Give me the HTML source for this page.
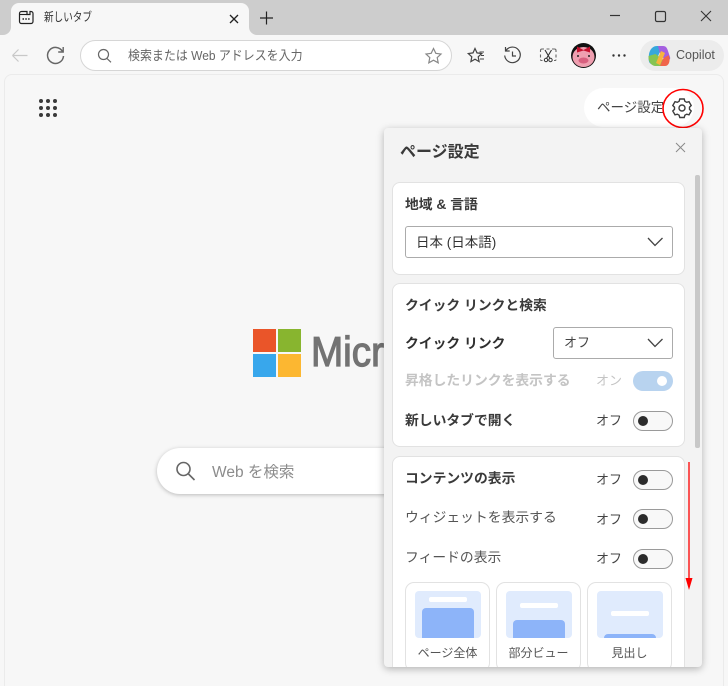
<!DOCTYPE html>
<html lang="ja"><head><meta charset="utf-8"><style>
html,body{margin:0;padding:0;width:728px;height:686px;overflow:hidden;background:#f7f7f7}
body{position:relative;font-family:"Liberation Sans","Noto Sans CJK JP",sans-serif;color:#333}
.a{position:absolute;white-space:nowrap}
svg{position:absolute;overflow:visible}
.t{font-size:13.8px;line-height:18px}
.o{font-size:13px;line-height:18px;color:#444}
.b{font-weight:700;color:#3a3a3a}
.card{position:absolute;left:392px;width:293px;background:#fff;border:1px solid #e2e2e2;border-radius:8px;box-sizing:border-box}
.tog{position:absolute;left:633px;width:40px;height:20px;border:1px solid #9a9a9a;border-radius:10px;box-sizing:border-box;background:#f8f8f8}
.tog i{position:absolute;left:4px;top:4px;width:10px;height:10px;border-radius:50%;background:#2b2b2b}
.sel{position:absolute;background:#fff;border:1px solid #ababab;border-radius:3px;box-sizing:border-box}
.th{position:absolute;top:582px;width:85px;height:90px;background:#fff;border:1px solid #e2e2e2;border-radius:9px;box-sizing:border-box}
.pv{position:absolute;left:9px;top:8px;width:66px;height:47px;background:#e0ebfd;border-radius:4px;overflow:hidden}
.pv u{position:absolute;left:14px;width:38px;height:5px;background:#fff;border-radius:2px}
.pv b{position:absolute;left:7px;width:52px;background:#8db4f9;border-radius:4px 4px 0 0;height:40px}
.th span{position:absolute;left:0;right:0;top:62px;text-align:center;font-size:12px;line-height:16px;color:#555}
</style></head><body>
<div class="a" style="left:0;top:0;width:728px;height:35px;background:#cdcdcd"></div>
<div class="a" style="left:11px;top:3px;width:238px;height:32px;background:#f7f7f7;border-radius:8px 8px 0 0"></div>
<svg style="left:0;top:0" width="728" height="74" fill="none">
<path d="M3 35a8 8 0 0 0 8-8v8zM249 27a8 8 0 0 0 8 8h-8z" fill="#f7f7f7"/>
<path d="M27 11.500h-5.500a2 2 0 0 0-2 2v8a2 2 0 0 0 2 2h9.500a2 2 0 0 0 2-2v-8a2 2 0 0 0-2-2h-1v3h-3z" stroke="#222" stroke-width="1.200"/>
<path d="M19.500 14.500h7.500" stroke="#222" stroke-width="1.100"/>
<path d="M22.500 19h8" stroke="#222" stroke-width="1.500" stroke-dasharray="1.500 1.300"/>
<path d="M230 15l8 8M238 15l-8 8" stroke="#222" stroke-width="1.300"/>
<path d="M266.500 11.500v13M260 18h13" stroke="#222" stroke-width="1.200"/>
<path d="M610 15.500h10" stroke="#333" stroke-width="1.200"/>
<rect x="655.500" y="11.500" width="10" height="10" rx="1.500" stroke="#333" stroke-width="1.200"/>
<path d="M701 11l10 10M711 11l-10 10" stroke="#333" stroke-width="1.100"/>
<path d="M12.500 55.500h15M12.500 55.500l6-6M12.500 55.500l6 6" stroke="#c8c8c8" stroke-width="1.200"/>
<path d="M62.500 51.500A8 8 0 1 0 63.500 56" stroke="#666" stroke-width="1.500"/>
<path d="M63.200 47v5h-5" stroke="#666" stroke-width="1.400"/>
</svg>
<div class="a" style="left:44px;top:9px;font-size:12px;line-height:17px;color:#333;transform:scaleX(.8);transform-origin:left top">新しいタブ</div>
<div class="a" style="left:80px;top:40px;width:372px;height:31px;box-sizing:border-box;background:#fff;border:1px solid #d6d6d6;border-radius:16px"></div>
<div class="a" style="left:128px;top:46px;font-size:13px;line-height:19px;color:#666;transform:scaleX(.92);transform-origin:left top">検索または Web アドレスを入力</div>
<svg style="left:0;top:0" width="728" height="130" fill="none">
<circle cx="103.500" cy="54.500" r="5" stroke="#666" stroke-width="1.200"/><path d="M107 58.500l4 3.800" stroke="#666" stroke-width="1.200"/>
<path d="M433.500 48.500l2.300 4.800 5.200.7-3.800 3.600 1 5.200-4.700-2.600-4.700 2.600 1-5.200-3.800-3.600 5.200-.7z" stroke="#888" stroke-width="1.200"/>
<path d="M475 48.500l2 4.400 4.700.6-3.500 3.300.9 4.800-4.100-2.400-4.100 2.400.9-4.800-3.500-3.300 4.700-.6z" stroke="#444" stroke-width="1.200"/>
<path d="M479.500 52h4.500M481 55.500h3M480 59h4" stroke="#444" stroke-width="1.100"/>
<path d="M506 50.500a7.800 7.800 0 1 1-1.300 5M505.500 47v4h4.200M512.500 51.500v4.500h3.500" stroke="#444" stroke-width="1.200"/>
<path d="M540.500 52v-1.500a1.500 1.500 0 0 1 1.500-1.500h2M546.500 49h3M552 49h2.500a1.500 1.500 0 0 1 1.500 1.500v1.500M556 54.500v3M556 59.500a1 1 0 0 1-1 1h-1M540.500 54.500v3M540.500 59.500a1 1 0 0 0 1 1h1" stroke="#666" stroke-width="1.100"/>
<path d="M545 50l5 8.500M551.500 50l-5 8.500" stroke="#333" stroke-width="1.100"/><circle cx="546" cy="60" r="1.700" stroke="#333"/><circle cx="550.500" cy="60" r="1.700" stroke="#333"/>
<circle cx="583.500" cy="55.500" r="12.500" fill="#111"/><ellipse cx="583.500" cy="57" rx="11" ry="10" fill="#ef9fb0"/>
<path d="M577 46.500l6.500 3.500 6.500-3.500v6l-6.500-2-6.500 2z" fill="#c4122f"/>
<ellipse cx="583.500" cy="60.500" rx="5" ry="3" fill="#d8607f"/>
<circle cx="578" cy="56" r="1" fill="#222"/><circle cx="589" cy="56" r="1" fill="#222"/>
<circle cx="613.500" cy="55.500" r="1.200" fill="#333"/><circle cx="619" cy="55.500" r="1.200" fill="#333"/><circle cx="624.500" cy="55.500" r="1.200" fill="#333"/>
</svg>
<div class="a" style="left:640px;top:40px;width:84px;height:31px;background:#ececec;border-radius:16px"></div>
<svg style="left:0;top:0" width="728" height="80">
<path d="M649 54c1-5 4-8 8-8h5l-5 13c-1 3-3 5-5 5-3 0-4-3-3-10z" fill="#37a8dc"/>
<path d="M658 46h5c3 0 4 2 5 5l2 6c1 3-2 4-5 3l-5-6z" fill="#a45fe0"/>
<path d="M648.500 57c0 5 3 9 7 9h5l3-6-8-6-7 2z" fill="#86c452"/>
<path d="M660 66h5c3 0 5-3 4.500-8l-1-3c-2 2-5 2-6 5z" fill="#f0644a"/>
<path d="M661 51l-5 12 4 2 5-12z" fill="#f8b33c"/>
</svg>
<div class="a" style="left:676px;top:47px;font-size:12.500px;line-height:17px;color:#555">Copilot</div>

<div class="a" style="left:4px;top:74px;width:720px;height:620px;background:#f7f7f7;border:1px solid #ebebeb;border-radius:8px;box-sizing:border-box"></div>
<svg style="left:0;top:0" width="100" height="130">
<g fill="#3a3a3a"><circle cx="41" cy="101" r="2"/><circle cx="48" cy="101" r="2"/><circle cx="55" cy="101" r="2"/><circle cx="41" cy="108" r="2"/><circle cx="48" cy="108" r="2"/><circle cx="55" cy="108" r="2"/><circle cx="41" cy="115" r="2"/><circle cx="48" cy="115" r="2"/><circle cx="55" cy="115" r="2"/></g>
</svg>
<div class="a" style="left:584px;top:88px;width:110px;height:39px;background:#fff;border-radius:20px"></div>
<div class="a" style="left:597px;top:99px;font-size:13.500px;line-height:18px;color:#444;width:68px;overflow:hidden">ページ設定</div>
<svg style="left:662px;top:88px" width="42" height="41" fill="none">
<ellipse cx="21" cy="20.500" rx="20" ry="19" stroke="#f00" stroke-width="1.600"/>
<g transform="translate(20 20)" stroke="#3c3c3c" stroke-width="1.400">
<path d="M-2.200-9h4.400l.7 2.300 1.800 1 2.300-.6 2.200 3.800-1.700 1.700v2.100l1.700 1.700-2.200 3.800-2.300-.6-1.800 1-.7 2.300h-4.400l-.7-2.300-1.800-1-2.300.6-2.200-3.800 1.700-1.700v-2.100l-1.700-1.700 2.200-3.800 2.300.6 1.800-1z"/>
<circle r="3"/></g></svg>

<svg style="left:253px;top:329px" width="48" height="48">
<rect width="23" height="23" fill="#ea5529"/><rect x="25" width="23" height="23" fill="#88b52f"/>
<rect y="25" width="23" height="23" fill="#38a7ec"/><rect x="25" y="25" width="23" height="23" fill="#fcb731"/></svg>
<div class="a" style="left:311px;top:326px;font-size:42px;line-height:52px;color:#737373;width:80px;overflow:hidden;-webkit-text-stroke:1.200px #737373;transform:scaleX(.92);transform-origin:left top">Microsoft</div>
<div class="a" style="left:157px;top:448px;width:260px;height:46px;background:#fff;border-radius:23px;box-shadow:0 1px 4px rgba(0,0,0,.25)"></div>
<svg style="left:170px;top:458px" width="30" height="26" fill="none"><circle cx="13.500" cy="11" r="6.500" stroke="#666" stroke-width="1.600"/><path d="M18.500 16l6 6" stroke="#666" stroke-width="1.600"/></svg>
<div class="a" style="left:212px;top:462px;font-size:15.500px;line-height:21px;color:#8c8c8c">Web を検索</div>

<div class="a" style="left:384px;top:128px;width:318px;height:539px;background:#f3f3f3;border-radius:4px;box-shadow:0 2px 8px rgba(0,0,0,.28);overflow:hidden"></div>
<div class="a" style="left:400px;top:142px;font-size:16px;line-height:21px;font-weight:700;color:#3a3a3a">ページ設定</div>
<svg style="left:675px;top:142px" width="11" height="11" fill="none"><path d="M1 1l9 9M10 1l-9 9" stroke="#888" stroke-width="1"/></svg>
<div class="a" style="left:695px;top:175px;width:5px;height:273px;background:#c8c8c8;border-radius:2px"></div>

<div class="card" style="top:182px;height:93px"></div>
<div class="a t b" style="left:405px;top:196px">地域 &amp; 言語</div>
<div class="sel" style="left:405px;top:226px;width:268px;height:32px"></div>
<div class="a" style="left:416px;top:234px;font-size:13.500px;line-height:18px;color:#333">日本 (日本語)</div>
<svg style="left:646px;top:236px" width="18" height="12" fill="none"><path d="M2 2l7 7.500L16.500 2" stroke="#444" stroke-width="1.300"/></svg>

<div class="card" style="top:283px;height:164px"></div>
<div class="a t b" style="left:405px;top:297px">クイック リンクと検索</div>
<div class="a t b" style="left:405px;top:335px;color:#2f2f2f">クイック リンク</div>
<div class="sel" style="left:553px;top:327px;width:120px;height:32px"></div>
<div class="a o" style="left:564px;top:334px">オフ</div>
<svg style="left:646px;top:337px" width="18" height="12" fill="none"><path d="M2 2l7 7.500L16.500 2" stroke="#444" stroke-width="1.300"/></svg>
<div class="a t" style="left:405px;top:372px;font-weight:700;color:#c4c4c4">昇格したリンクを表示する</div>
<div class="a o" style="left:596px;top:372px;color:#c4c4c4">オン</div>
<div class="a" style="left:633px;top:371px;width:40px;height:20px;background:#b8d3ef;border-radius:10px"><i style="position:absolute;left:24px;top:5px;width:10px;height:10px;border-radius:50%;background:#fff"></i></div>
<div class="a t b" style="left:405px;top:412px">新しいタブで開く</div>
<div class="a o" style="left:596px;top:412px">オフ</div>
<div class="tog" style="top:411px"><i></i></div>

<div class="a" style="left:392px;top:456px;width:293px;height:211px;overflow:hidden">
<div class="card" style="left:0;top:0;height:260px"></div></div>
<div class="a t b" style="left:405px;top:470px">コンテンツの表示</div>
<div class="a o" style="left:596px;top:471px">オフ</div>
<div class="tog" style="top:470px"><i></i></div>
<div class="a t" style="left:405px;top:509px;color:#555">ウィジェットを表示する</div>
<div class="a o" style="left:596px;top:511px">オフ</div>
<div class="tog" style="top:509px"><i></i></div>
<div class="a t" style="left:405px;top:549px;color:#555">フィードの表示</div>
<div class="a o" style="left:596px;top:550px">オフ</div>
<div class="tog" style="top:549px"><i></i></div>

<div class="a" style="left:384px;top:570px;width:318px;height:97px;overflow:hidden">
<div class="th" style="left:21px;top:12px"><div class="pv"><u style="top:6px"></u><b style="top:17px"></b></div><span>ページ全体</span></div>
<div class="th" style="left:112px;top:12px"><div class="pv"><u style="top:12px"></u><b style="top:29px"></b></div><span>部分ビュー</span></div>
<div class="th" style="left:203px;top:12px"><div class="pv"><u style="top:20px"></u><b style="top:43px"></b></div><span>見出し</span></div>
</div>

<svg style="left:684px;top:460px" width="10" height="132" fill="none"><path d="M5 2v122" stroke="#f00" stroke-width="1.300"/><path d="M1.500 118L5 130l3.500-12z" fill="#f00"/></svg>
</body></html>
